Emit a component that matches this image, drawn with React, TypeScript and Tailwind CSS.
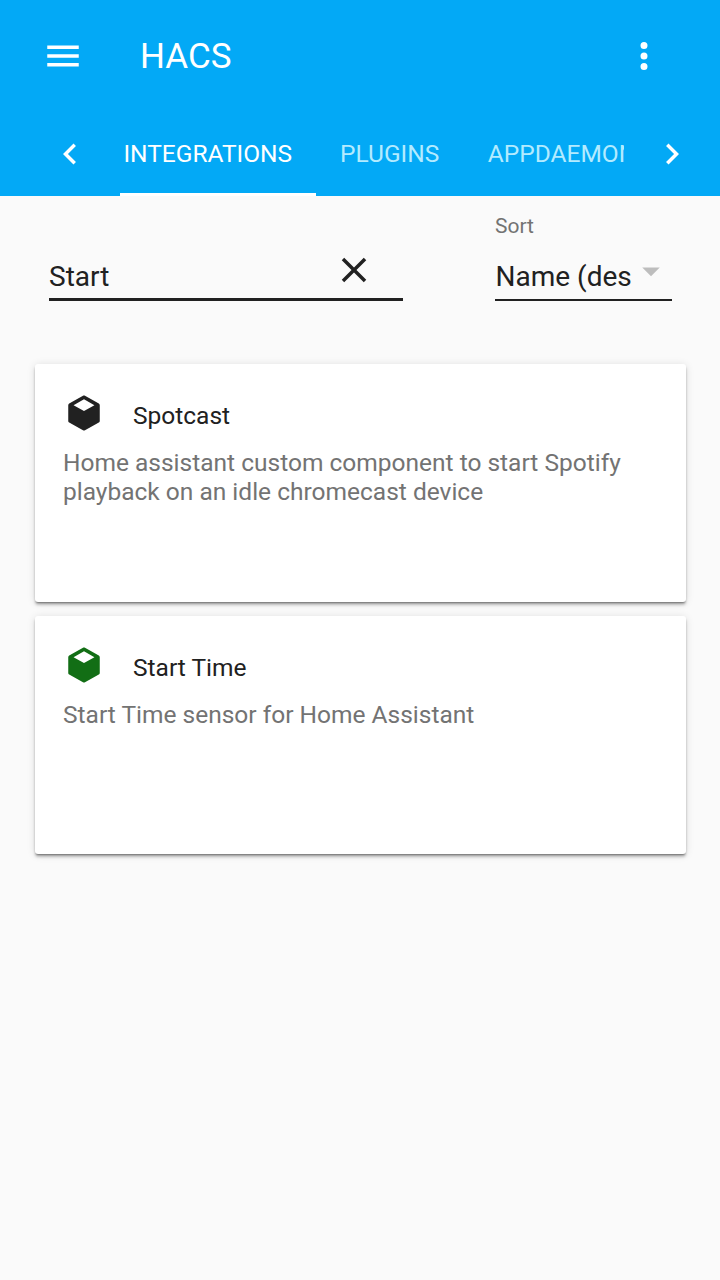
import clsx from "clsx";

const ICONS = {
  menu: "M3 6h18v2H3V6m0 5h18v2H3v-2m0 5h18v2H3v-2z",
  dots: "M12 16a2 2 0 0 1 2 2 2 2 0 0 1-2 2 2 2 0 0 1-2-2 2 2 0 0 1 2-2m0-6a2 2 0 0 1 2 2 2 2 0 0 1-2 2 2 2 0 0 1-2-2 2 2 0 0 1 2-2m0-6a2 2 0 0 1 2 2 2 2 0 0 1-2 2 2 2 0 0 1-2-2 2 2 0 0 1 2-2z",
  left: "M15.41 7.41L14 6l-6 6 6 6 1.41-1.41L10.83 12z",
  right: "M10 6L8.59 7.41 13.17 12l-4.58 4.59L10 18l6-6z",
  close:
    "M19 6.41L17.59 5 12 10.59 6.41 5 5 6.41 10.59 12 5 17.59 6.41 19 12 13.41 17.59 19 19 17.59 13.41 12z",
  dropdown: "M7 10l5 5 5-5z",
  cube: "M21 16.5c0 .38-.21.71-.53.88l-7.9 4.44c-.16.12-.36.18-.57.18s-.41-.06-.57-.18l-7.9-4.44A.991.991 0 0 1 3 16.5v-9c0-.38.21-.71.53-.88l7.9-4.44c.16-.12.36-.18.57-.18s.41.06.57.18l7.9 4.44c.32.17.53.5.53.88v9M12 4.15L6.04 7.5 12 10.85l5.96-3.35L12 4.15z",
};

const TABS = ["Integrations", "Plugins", "AppDaemon"];

const REPOSITORIES = [
  {
    name: "Spotcast",
    description:
      "Home assistant custom component to start Spotify playback on an idle chromecast device",
    installed: false,
  },
  {
    name: "Start Time",
    description: "Start Time sensor for Home Assistant",
    installed: true,
  },
];

export default function App() {
  return (
    <div className="min-h-screen w-full bg-[#fafafa] font-[Roboto,sans-serif] text-[#212121]">
      <Header />
      <Filters />
      <main className="flex flex-col gap-3.5 pl-[35px] pr-[34px] pt-[63px]">
        {REPOSITORIES.map((repo) => (
          <RepositoryCard key={repo.name} {...repo} />
        ))}
      </main>
    </div>
  );
}

function Header() {
  return (
    <header className="h-49 bg-[#03a9f6] text-white">
      <div className="flex h-28 items-center pl-[42px] pr-[55px]">
        <button aria-label="Menu">
          <Icon name="menu" />
        </button>
        <h1 className="ml-[56px] text-[35px] leading-none">HACS</h1>
        <button aria-label="More" className="ml-auto">
          <Icon name="dots" />
        </button>
      </div>
      <nav className="flex h-21 items-center pl-[49px]">
        <button aria-label="Previous tabs">
          <Icon name="left" />
        </button>
        <div className="ml-[28.5px] flex h-full w-[504px] overflow-hidden">
          {TABS.map((tab, i) => (
            <button
              key={tab}
              className={clsx(
                "h-full shrink-0 border-b-3 pt-1 text-[24.5px] uppercase",
                i === 0
                  ? "mr-[24px] w-[196.5px] border-white pr-5 text-center"
                  : "mr-[48.5px] border-transparent text-[#b3ebff]",
              )}
            >
              {tab}
            </button>
          ))}
        </div>
        <button aria-label="Next tabs" className="ml-[27.5px]">
          <Icon name="right" />
        </button>
      </nav>
    </header>
  );
}

function Filters() {
  return (
    <div className="flex h-[105px] items-end justify-between pl-[49px] pr-12">
      <label className="flex h-[52px] w-[354px] items-start justify-between border-b-3 border-[#212121] pr-[28.5px]">
        <span className="pt-3 text-[28px] leading-8">Start</span>
        <Icon name="close" />
      </label>
      <div className="w-[177px]">
        <div className="text-[21px] leading-6 text-[#737373]">Sort</div>
        <div className="mt-[11px] flex h-[52px] items-start border-b-2 border-[#212121]">
          <span className="w-[135px] whitespace-nowrap pt-3 pl-[0.5px] text-[28px] leading-8">
            Name (des
          </span>
          <Icon name="dropdown" className="mt-px text-[#bdbdbd]" />
        </div>
      </div>
    </div>
  );
}

interface RepositoryCardProps {
  name: string;
  description: string;
  installed: boolean;
}
function RepositoryCard({ name, description, installed }: RepositoryCardProps) {
  return (
    <article className="h-[238px] rounded-[3px] bg-white px-7 pt-7 shadow-[0_3px_3px_rgba(0,0,0,0.2),0_1px_8px_rgba(0,0,0,0.12),0_2px_2px_-1px_rgba(0,0,0,0.4)]">
      <div className="flex items-start">
        <Icon name="cube" className={installed ? "text-[#126e15]" : ""} />
        <h2 className="ml-7 pt-[9px] text-[24.5px] leading-[30px]">{name}</h2>
      </div>
      <p className="mt-[13.6px] text-[24.5px] leading-[29.4px] text-[#737373]">
        {description}
      </p>
    </article>
  );
}

interface IconProps {
  name: keyof typeof ICONS;
  className?: string;
}
function Icon({ name, className }: IconProps) {
  return (
    <svg
      viewBox="0 0 24 24"
      className={clsx("size-[42px] shrink-0 fill-current", className)}
    >
      <path d={ICONS[name]} />
    </svg>
  );
}
